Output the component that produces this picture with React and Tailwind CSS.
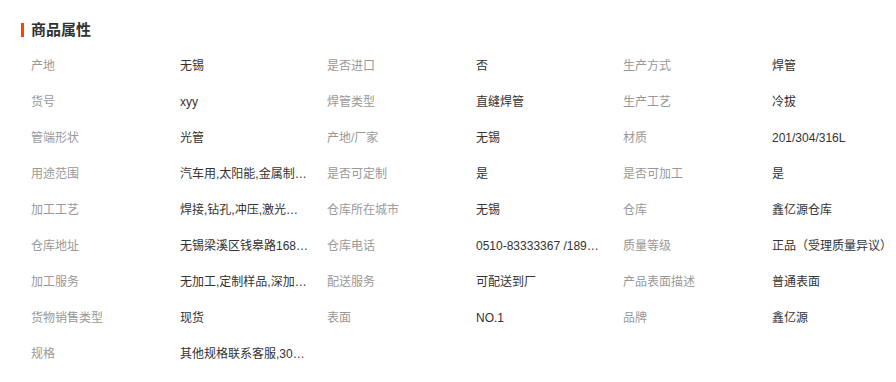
import React from 'react';

const rows = [
    [['产地', '无锡'], ['是否进口', '否'], ['生产方式', '焊管']],
    [['货号', 'xyy'], ['焊管类型', '直缝焊管'], ['生产工艺', '冷拔']],
    [['管端形状', '光管'], ['产地/厂家', '无锡'], ['材质', '201/304/316L']],
    [['用途范围', '汽车用,太阳能,金属制品,机械制造'], ['是否可定制', '是'], ['是否可加工', '是']],
    [['加工工艺', '焊接,钻孔,冲压,激光切割,折弯'], ['仓库所在城市', '无锡'], ['仓库', '鑫亿源仓库']],
    [['仓库地址', '无锡梁溪区钱皋路168号不锈钢市场'], ['仓库电话', '0510-83333367 /18921118888'], ['质量等级', '正品（受理质量异议）']],
    [['加工服务', '无加工,定制样品,深加工,表面处理'], ['配送服务', '可配送到厂'], ['产品表面描述', '普通表面']],
    [['货物销售类型', '现货'], ['表面', 'NO.1'], ['品牌', '鑫亿源']],
    [['规格', '其他规格联系客服,3000*1500']],
];

const App = () => {
    return (
        <div className="w-[896px] h-[382px] bg-white overflow-hidden pl-[21px] pt-[19px] text-[12px]" style={{ fontFamily: '"Liberation Sans", "Noto Sans CJK SC", sans-serif' }}>
            <div className="flex items-center h-[22px]">
                <span className="w-[3px] h-[14px] bg-[#ff4400]"></span>
                <h2 className="ml-[7px] text-[15px] font-bold text-[#333]">商品属性</h2>
            </div>

            <div className="mt-[7px] pl-[10px]">
                {rows.map((row, i) => (
                    <div key={i} className="flex h-[36px] items-center">
                        {row.map(([label, value], j) => (
                            <div key={j} className="flex w-[296px] shrink-0">
                                <span className="w-[149px] shrink-0 text-[#999]">{label}</span>
                                <span className="w-[129px] truncate text-[#333]">{value}</span>
                            </div>
                        ))}
                    </div>
                ))}
            </div>
        </div>
    );
};

export default App;
